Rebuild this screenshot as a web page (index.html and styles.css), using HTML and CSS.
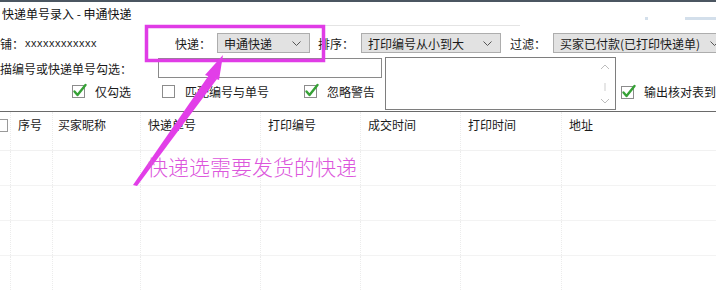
FILE: index.html
```html
<!DOCTYPE html>
<html lang="zh-CN">
<head>
<meta charset="utf-8">
<title>快递单号录入 - 申通快递</title>
<link rel="stylesheet" href="styles.css">
</head>
<body>
<div class="win">
  <div class="title">
    <span class="title-text">快递单号录入 - 申通快递</span>
    <span class="deco deco-a"></span><span class="deco deco-b"></span>
  </div>

  <div class="row1">
    <span class="shop">铺：</span>
    <span class="shopname">xxxxxxxxxxxx</span>
    <span class="lbl l-exp">快递：</span>
    <div class="sel s-exp"><span>申通快递</span><svg class="chev" viewBox="0 0 9 5"><path d="M0.5 0.5 L4.5 4.5 L8.5 0.5"/></svg></div>
    <span class="lbl l-sort">排序：</span>
    <div class="sel s-sort"><span>打印编号从小到大</span><svg class="chev" viewBox="0 0 9 5"><path d="M0.5 0.5 L4.5 4.5 L8.5 0.5"/></svg></div>
    <span class="lbl l-filter">过滤：</span>
    <div class="sel s-filter"><span>买家已付款(已打印快递单)</span><svg class="chev" viewBox="0 0 9 5"><path d="M0.5 0.5 L4.5 4.5 L8.5 0.5"/></svg></div>
  </div>

  <div class="lower">
    <div class="left">
      <div class="row2">
        <span class="scanlbl">描编号或快递单号勾选：</span>
        <div class="input"></div>
      </div>
      <div class="row3">
        <span class="chk c1"><svg class="cb" viewBox="0 0 14 14"><rect x="0.5" y="1.5" width="12" height="12"/><path class="tick" d="M2.5 7.5 L5.5 11 L13.5 1"/></svg>仅勾选</span>
        <span class="chk c2"><svg class="cb" viewBox="0 0 14 14"><rect x="0.5" y="1.5" width="12" height="12"/></svg>匹配编号与单号</span>
        <span class="chk c3"><svg class="cb" viewBox="0 0 14 14"><rect x="0.5" y="1.5" width="12" height="12"/><path class="tick" d="M2.5 7.5 L5.5 11 L13.5 1"/></svg>忽略警告</span>
      </div>
    </div>
    <div class="memo">
      <svg class="scroll" viewBox="0 0 10 46"><path class="arr" d="M1 8 L5 4 L9 8"/><path class="bar" d="M5 22 L5 30"/><path class="arr" d="M1 38 L5 42 L9 38"/></svg>
    </div>
    <div class="right">
      <span class="chk c4"><svg class="cb" viewBox="0 0 14 14"><rect x="0.5" y="1.5" width="12" height="12"/><path class="tick" d="M2.5 7.5 L5.5 11 L13.5 1"/></svg>输出核对表到</span>
    </div>
  </div>

  <div class="grid">
    <div class="thead">
      <div class="cell k0"><span class="hcb"></span></div>
      <div class="cell k1">序号</div>
      <div class="cell k2">买家昵称</div>
      <div class="cell k3">快递单号</div>
      <div class="cell k4">打印编号</div>
      <div class="cell k5">成交时间</div>
      <div class="cell k6">打印时间</div>
      <div class="cell k7">地址</div>
    </div>
    <div class="trow"><div class="cell k0"></div><div class="cell k1"></div><div class="cell k2"></div><div class="cell k3"></div><div class="cell k4"></div><div class="cell k5"></div><div class="cell k6"></div><div class="cell k7"></div></div>
    <div class="trow"><div class="cell k0"></div><div class="cell k1"></div><div class="cell k2"></div><div class="cell k3"></div><div class="cell k4"></div><div class="cell k5"></div><div class="cell k6"></div><div class="cell k7"></div></div>
    <div class="trow"><div class="cell k0"></div><div class="cell k1"></div><div class="cell k2"></div><div class="cell k3"></div><div class="cell k4"></div><div class="cell k5"></div><div class="cell k6"></div><div class="cell k7"></div></div>
    <div class="trow"><div class="cell k0"></div><div class="cell k1"></div><div class="cell k2"></div><div class="cell k3"></div><div class="cell k4"></div><div class="cell k5"></div><div class="cell k6"></div><div class="cell k7"></div></div>
  </div>

  <svg class="annot" viewBox="0 0 716 290">
    <rect class="hl" x="146.5" y="26.5" width="177" height="34"/>
    <polygon class="shaft" points="209,75 217,79 137,186 133,185"/>
    <polygon class="head" points="223,55 205,75 219,80"/>
  </svg>
  <div class="note">快递选需要发货的快递</div>
</div>
</body>
</html>
```

FILE: styles.css
```css
html, body {
  margin: 0;
  padding: 0;
  background: #ffffff;
}

.win {
  position: relative;
  width: 716px;
  height: 290px;
  overflow: hidden;
  font-family: "Noto Sans CJK SC", "Microsoft YaHei", sans-serif;
  font-size: 12px;
  color: #1a1a1a;
  background: #ffffff;
}

/* title bar */
.title {
  position: relative;
  height: 24px;
  border-top: 2px solid #4b5661;
  padding-left: 2px;
  line-height: 24px;
  font-size: 12px;
  color: #111;
}
.title::after {
  content: "";
  position: absolute;
  left: 150px;
  width: 370px;
  bottom: 0;
  height: 1px;
  background: #e4e4e4;
}
.deco {
  position: absolute;
  top: 15px;
  height: 3px;
  background: #d3dfeb;
}
.deco-a { left: 645px; width: 3px; }
.deco-b { left: 685px; width: 31px; }

/* first row */
.row1 {
  display: flex;
  align-items: center;
  height: 20px;
  margin-top: 7px;
  white-space: nowrap;
}
.shop {
  width: 24px;
}
.shopname {
  width: 72px;
  margin-left: 1px;
  font-family: "Liberation Sans", sans-serif;
  font-size: 11px;
  letter-spacing: 0.5px;
  color: #222;
}
.lbl {
  width: 36px;
}
.l-exp { margin-left: 78px; }
.l-sort { margin-left: 8px; }
.l-filter { margin-left: 9px; }

.sel {
  box-sizing: border-box;
  height: 20px;
  display: flex;
  align-items: center;
  justify-content: space-between;
  padding: 0 8px 0 6px;
  background: #e2e2e2;
  border: 1px solid #adadad;
  flex-shrink: 0;
}
.s-exp { margin-left: 6px; width: 93px; }
.s-sort { margin-left: 7px; width: 140px; }
.s-filter { margin-left: 7px; width: 175px; }
.chev {
  width: 9px;
  height: 5px;
}
.chev path {
  fill: none;
  stroke: #555;
  stroke-width: 1;
}

/* lower controls */
.lower {
  display: flex;
  margin-top: 4px;
  height: 53px;
}
.left {
  width: 386px;
  display: flex;
  flex-direction: column;
}
.row2 {
  display: flex;
  align-items: center;
  height: 22px;
}
.scanlbl {
  width: 158px;
}
.input {
  box-sizing: border-box;
  width: 224px;
  height: 20px;
  border: 1px solid #8a8a8a;
  background: #fff;
}
.row3 {
  display: flex;
  align-items: center;
  height: 16px;
  margin-top: 4px;
}
.chk {
  display: flex;
  align-items: center;
  white-space: nowrap;
}
.cb {
  width: 14px;
  height: 14px;
  margin-right: 9px;
  overflow: visible;
}
.cb rect {
  fill: #ffffff;
  stroke: #8c8c8c;
  stroke-width: 1;
}
.cb .tick {
  fill: none;
  stroke: #36a136;
  stroke-width: 2.4;
  stroke-linecap: round;
  stroke-linejoin: round;
}
.c1 { margin-left: 72px; }
.c2 { margin-left: 31px; }
.c3 { margin-left: 35px; }

.memo {
  box-sizing: border-box;
  width: 231px;
  height: 53px;
  border: 1px solid #7e7e7e;
  background: #fff;
  display: flex;
  justify-content: flex-end;
  padding: 3px 5px 0 0;
}
.scroll {
  width: 10px;
  height: 46px;
}
.scroll .arr {
  fill: none;
  stroke: #bdbdbd;
  stroke-width: 1;
}
.scroll .bar {
  stroke: #e6e6e6;
  stroke-width: 2;
}
.right {
  padding-left: 5px;
  padding-top: 26px;
}
.c4 .cb { margin-right: 9px; }

/* table */
.grid {
  margin-top: 1px;
  border-top: 1px solid #6a6a6a;
}
.thead, .trow {
  display: flex;
}
.thead {
  height: 38px;
  border-bottom: 1px solid #f1f1f1;
}
.trow {
  height: 34px;
  border-bottom: 1px solid #f3f3f3;
}
.cell {
  box-sizing: border-box;
  flex-shrink: 0;
  padding: 5px 0 0 7px;
  line-height: 16px;
  border-left: 1px dotted #ececec;
  white-space: nowrap;
  color: #1a1a1a;
}
.k0 { width: 10px; border-left: none; padding: 0; position: relative; }
.k1 { width: 42px; }
.k2 { width: 88px; padding-left: 5px; }
.k3 { width: 120px; }
.k4 { width: 100px; }
.k5 { width: 100px; }
.k6 { width: 101px; }
.k7 { width: 155px; }

.hcb {
  position: absolute;
  left: -5px;
  top: 7px;
  width: 11px;
  height: 11px;
  border: 1px solid #9a9a9a;
  background: #fff;
}

/* annotation overlay */
.annot {
  position: absolute;
  left: 0;
  top: 0;
  width: 716px;
  height: 290px;
  pointer-events: none;
}
.hl {
  fill: none;
  stroke: #e03ce6;
  stroke-width: 3.5;
}
.shaft, .head {
  fill: #e23ee8;
}
.note {
  position: absolute;
  left: 147px;
  top: 153px;
  font-family: "Noto Sans CJK SC", sans-serif;
  font-weight: 300;
  font-size: 21px;
  line-height: 26px;
  color: #dc56dc;
  white-space: nowrap;
}
```
